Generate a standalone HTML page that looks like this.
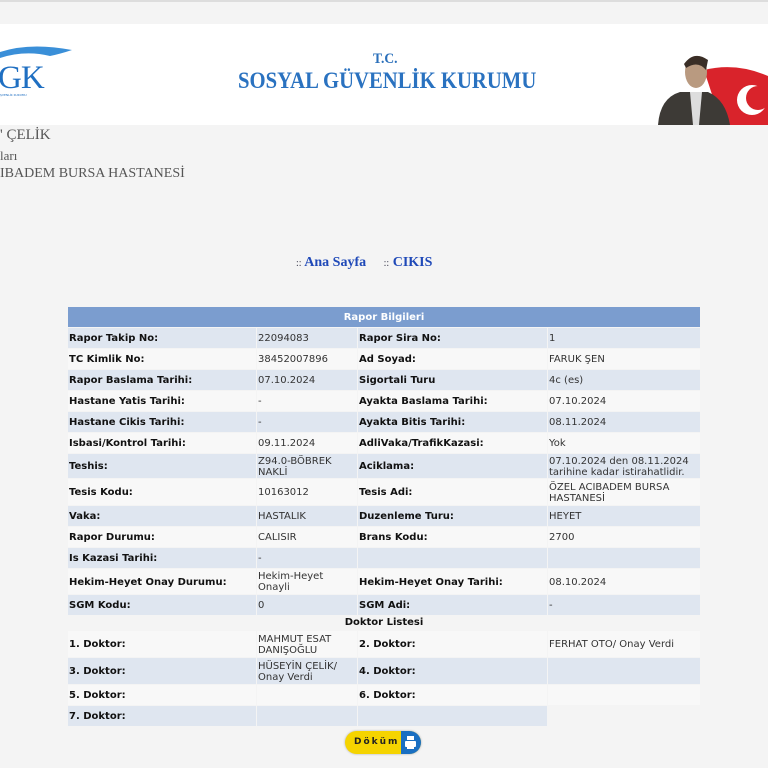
<!DOCTYPE html>
<html><head><meta charset="utf-8"><style>
body{margin:0;width:768px;height:768px;background:#f4f4f4;position:relative;overflow:hidden;font-family:"DejaVu Sans",Verdana,sans-serif;}
.top{position:absolute;left:0;top:0;width:768px;height:2px;background:#ddd}
.hdr{position:absolute;left:0;top:24px;width:768px;height:101px;background:#fff}
.serif{font-family:"Liberation Serif",serif}
.r{position:absolute;left:68px;width:632px}
.c{position:absolute;top:0;bottom:0;display:flex;align-items:center;font-size:10px;color:#333;line-height:11px;padding-left:1px;padding-top:1px;box-sizing:border-box}
.b{font-weight:bold;color:#111}
.c1{left:0;width:188px}.c2{left:189px;width:100px}.c3{left:290px;width:189px}.c4{left:480px;width:152px}
.blue .c{background:#dfe6f0}
.wh .c{background:#f8f8f8}
</style></head><body>
<div class="top"></div>
<div class="hdr">
 <svg style="position:absolute;left:0;top:20px" width="75" height="60"><path d="M0 8 Q30 -2 72 6 Q60 10 50 12 Q25 6 0 14Z" fill="#3a8fd8"/></svg>
 <div class="serif" style="position:absolute;left:-2px;top:36px;font-size:33px;color:#1f6fc2;letter-spacing:-1px">GK</div>
 <div style="position:absolute;left:0;top:69px;font-size:3px;color:#1f6fc2">ŞVENLİK KURUMU</div>
 <div class="serif" style="position:absolute;left:373px;top:27px;font-size:15px;font-weight:bold;color:#2a6fba;transform:scaleX(0.9);transform-origin:left">T.C.</div>
 <div class="serif" style="position:absolute;left:238px;top:44px;font-size:23px;font-weight:bold;color:#2a72c0;white-space:nowrap;transform:scaleX(0.9);transform-origin:left">SOSYAL GÜVENLİK KURUMU</div>
 <svg style="position:absolute;left:656px;top:26px" width="112" height="75">
  <path d="M48 20 Q80 12 112 26 L112 75 L66 75 Z" fill="#d9232b"/>
  <circle cx="96" cy="50" r="15" fill="#fff"/><circle cx="102" cy="48" r="12" fill="#d9232b"/>
  <path d="M2 75 Q4 48 24 42 L52 42 Q70 50 74 75Z" fill="#3d3a36"/>
  <ellipse cx="40" cy="22" rx="11" ry="16" fill="#b99a80"/>
  <path d="M28 14 Q38 0 52 10 L50 20 Q42 10 30 18Z" fill="#3a2e26"/>
  <path d="M34 42 L46 42 L43 75 L37 75Z" fill="#ddd"/>
 </svg>
</div>
<div class="serif" style="position:absolute;left:0;top:127px;font-size:15px;color:#555">' ÇELİK</div>
<div class="serif" style="position:absolute;left:0;top:148px;font-size:13px;color:#555">ları</div>
<div class="serif" style="position:absolute;left:0;top:166px;font-size:14px;color:#555">IBADEM BURSA HASTANESİ</div>
<div class="serif" style="position:absolute;left:296px;top:255px;font-size:14px;font-weight:bold;color:#1f49b8;white-space:nowrap"><span style="font-size:10px;font-weight:normal;color:#445">::</span> Ana Sayfa &nbsp;&nbsp;&nbsp;&nbsp;<span style="font-size:10px;font-weight:normal;color:#445">::</span> CIKIS</div>

<div class="r" style="top:307px;height:20px;background:#7b9dcf;color:#fff;font-size:10px;font-weight:bold;text-align:center;line-height:22px">Rapor Bilgileri</div>

<div class="r blue" style="top:328px;height:20px"><div class="c c1 b">Rapor Takip No:</div><div class="c c2">22094083</div><div class="c c3 b">Rapor Sira No:</div><div class="c c4">1</div></div>
<div class="r wh" style="top:349px;height:20px"><div class="c c1 b">TC Kimlik No:</div><div class="c c2">38452007896</div><div class="c c3 b">Ad Soyad:</div><div class="c c4">FARUK ŞEN</div></div>
<div class="r blue" style="top:370px;height:20px"><div class="c c1 b">Rapor Baslama Tarihi:</div><div class="c c2">07.10.2024</div><div class="c c3 b">Sigortali Turu</div><div class="c c4">4c (es)</div></div>
<div class="r wh" style="top:391px;height:20px"><div class="c c1 b">Hastane Yatis Tarihi:</div><div class="c c2">-</div><div class="c c3 b">Ayakta Baslama Tarihi:</div><div class="c c4">07.10.2024</div></div>
<div class="r blue" style="top:412px;height:20px"><div class="c c1 b">Hastane Cikis Tarihi:</div><div class="c c2">-</div><div class="c c3 b">Ayakta Bitis Tarihi:</div><div class="c c4">08.11.2024</div></div>
<div class="r wh" style="top:433px;height:20px"><div class="c c1 b">Isbasi/Kontrol Tarihi:</div><div class="c c2">09.11.2024</div><div class="c c3 b">AdliVaka/TrafikKazasi:</div><div class="c c4">Yok</div></div>
<div class="r blue" style="top:454px;height:24px"><div class="c c1 b">Teshis:</div><div class="c c2">Z94.0-BÖBREK NAKLİ</div><div class="c c3 b">Aciklama:</div><div class="c c4">07.10.2024 den 08.11.2024 tarihine kadar istirahatlidir.</div></div>
<div class="r wh" style="top:479px;height:26px"><div class="c c1 b">Tesis Kodu:</div><div class="c c2">10163012</div><div class="c c3 b">Tesis Adi:</div><div class="c c4">ÖZEL ACIBADEM BURSA HASTANESİ</div></div>
<div class="r blue" style="top:506px;height:20px"><div class="c c1 b">Vaka:</div><div class="c c2">HASTALIK</div><div class="c c3 b">Duzenleme Turu:</div><div class="c c4">HEYET</div></div>
<div class="r wh" style="top:527px;height:20px"><div class="c c1 b">Rapor Durumu:</div><div class="c c2">CALISIR</div><div class="c c3 b">Brans Kodu:</div><div class="c c4">2700</div></div>
<div class="r blue" style="top:548px;height:20px"><div class="c c1 b">Is Kazasi Tarihi:</div><div class="c c2">-</div><div class="c c3"></div><div class="c c4"></div></div>
<div class="r wh" style="top:569px;height:25px"><div class="c c1 b">Hekim-Heyet Onay Durumu:</div><div class="c c2">Hekim-Heyet Onayli</div><div class="c c3 b">Hekim-Heyet Onay Tarihi:</div><div class="c c4">08.10.2024</div></div>
<div class="r blue" style="top:595px;height:20px"><div class="c c1 b">SGM Kodu:</div><div class="c c2">0</div><div class="c c3 b">SGM Adi:</div><div class="c c4">-</div></div>
<div class="r" style="top:616px;height:14px;font-size:10px;font-weight:bold;text-align:center;line-height:14px;color:#111">Doktor Listesi</div>
<div class="r wh" style="top:631px;height:26px"><div class="c c1 b">1. Doktor:</div><div class="c c2">MAHMUT ESAT DANIŞOĞLU</div><div class="c c3 b">2. Doktor:</div><div class="c c4">FERHAT OTO/ Onay Verdi</div></div>
<div class="r blue" style="top:658px;height:26px"><div class="c c1 b">3. Doktor:</div><div class="c c2">HÜSEYİN ÇELİK/ Onay Verdi</div><div class="c c3 b">4. Doktor:</div><div class="c c4"></div></div>
<div class="r wh" style="top:685px;height:20px"><div class="c c1 b">5. Doktor:</div><div class="c c2"></div><div class="c c3 b">6. Doktor:</div><div class="c c4"></div></div>
<div class="r blue" style="top:706px;height:20px"><div class="c c1 b">7. Doktor:</div><div class="c c2"></div><div class="c c3"></div></div>

<div style="position:absolute;left:345px;top:731px;width:76px;height:23px;border-radius:12px;background:#f5d400;box-shadow:0 0 2px #aaa;overflow:hidden">
 <div style="position:absolute;left:9px;top:6px;font-size:9px;font-weight:bold;letter-spacing:2px;color:#222">Döküm</div>
 <div style="position:absolute;right:0;top:0;width:20px;height:23px;background:#1a6fc2"></div>
 <div style="position:absolute;right:7px;top:5px;width:7px;height:4px;background:#fff"></div>
 <div style="position:absolute;right:5px;top:10px;width:11px;height:6px;background:#fff;border-radius:1px"></div>
 <div style="position:absolute;right:7px;top:15px;width:7px;height:3px;background:#fff"></div>
</div>
</body></html>
